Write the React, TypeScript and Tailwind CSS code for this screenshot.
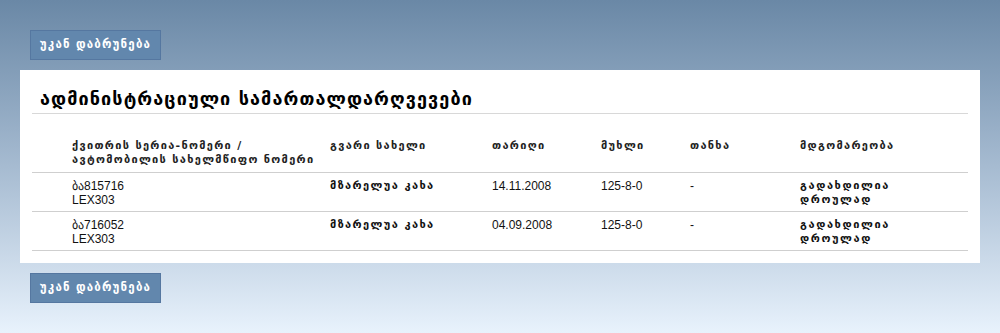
const rows = [
  { num: 'ბა815716', plate: 'LEX303', name: 'მზარელუა კახა', date: '14.11.2008', article: '125-8-0', sum: '-' },
  { num: 'ბა716052', plate: 'LEX303', name: 'მზარელუა კახა', date: '04.09.2008', article: '125-8-0', sum: '-' },
]

function BackButton() {
  return (
    <button className="h-[30px] w-[131px] bg-[#6287ad] border border-[#5577a0] text-white text-[11.5px] font-bold tracking-[1.2px] font-['DejaVu_Sans',sans-serif]">
      უკან დაბრუნება
    </button>
  )
}

export default function App() {
  return (
    <div className="w-[1000px] h-[333px] bg-gradient-to-b from-[#6a88a6] via-[#a6bbd1] to-[#e8f2fc] pt-[30px] px-[20px]">
      <div className="pl-[10px]">
        <BackButton />
      </div>

      <div className="mt-[10px] bg-white px-[12px] pt-[18px] pb-[12px]">
        <h1 className="px-[8px] pb-[3px] text-[18px] font-bold text-black border-b border-[#d8d8d8] leading-[22px] tracking-[1.1px] font-['DejaVu_Sans',sans-serif]">
          ადმინისტრაციული სამართალდარღვევები
        </h1>

        <div className="mt-[25px]">
          <div className="grid grid-cols-[258px_162px_109px_89px_110px_1fr] pl-[40px] pb-[5px] border-b border-[#cfcfcf] text-[11px] font-bold text-[#222] leading-[14px] tracking-[1.3px] font-['DejaVu_Sans',sans-serif]">
            <div>
              ქვითრის სერია-ნომერი /<br />ავტომობილის სახელმწიფო ნომერი
            </div>
            <div>გვარი სახელი</div>
            <div>თარიღი</div>
            <div>მუხლი</div>
            <div>თანხა</div>
            <div>მდგომარეობა</div>
          </div>

          {rows.map((r) => (
            <div
              key={r.num}
              className="grid grid-cols-[258px_162px_109px_89px_110px_1fr] pl-[40px] pt-[6px] pb-[4px] border-b border-[#cfcfcf] text-[12px] text-[#111] leading-[14px] font-['Liberation_Sans',Arial,sans-serif]"
            >
              <div>
                {r.num}
                <br />
                {r.plate}
              </div>
              <div className="text-[11px] font-bold tracking-[1.4px] font-['DejaVu_Sans',sans-serif]">
                {r.name}
              </div>
              <div>{r.date}</div>
              <div>{r.article}</div>
              <div>{r.sum}</div>
              <div className="text-[11px] font-bold tracking-[1.6px] font-['DejaVu_Sans',sans-serif]">
                გადახდილია
                <br />
                დროულად
              </div>
            </div>
          ))}
        </div>
      </div>

      <div className="pl-[10px] mt-[10px]">
        <BackButton />
      </div>
    </div>
  )
}
